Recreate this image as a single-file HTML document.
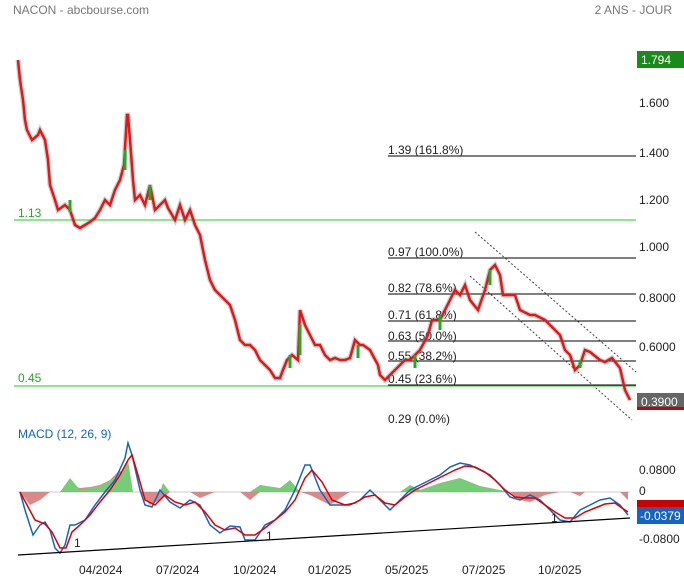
<!DOCTYPE html>
<html><head><meta charset="utf-8"><style>
body{margin:0;background:#fff;width:684px;height:580px;overflow:hidden;font-family:"Liberation Sans",sans-serif}
svg text{font-family:"Liberation Sans",sans-serif}
</style></head><body>
<svg width="684" height="580" xmlns="http://www.w3.org/2000/svg">
<text x="13" y="14" font-size="12" fill="#777">NACON - abcbourse.com</text>
<text x="672" y="14" font-size="12" fill="#777" text-anchor="end">2 ANS - JOUR</text>
<line x1="14" y1="220" x2="636" y2="220" stroke="#2c2" stroke-width="1"/>
<line x1="14" y1="386" x2="636" y2="386" stroke="#2c2" stroke-width="1"/>
<g stroke="#000" stroke-width="1">
<line x1="388" y1="156" x2="636" y2="156"/>
<line x1="388" y1="258" x2="636" y2="258"/>
<line x1="388" y1="294" x2="636" y2="294"/>
<line x1="388" y1="321" x2="636" y2="321"/>
<line x1="388" y1="341" x2="636" y2="341"/>
<line x1="388" y1="361" x2="636" y2="361"/>
<line x1="388" y1="385" x2="636" y2="385"/>
</g>
<g font-size="12" fill="#222">
<text x="18" y="217" fill="#2a2">1.13</text>
<text x="18" y="382" fill="#2a2">0.45</text>
<text x="388" y="154">1.39  (161.8%)</text>
<text x="388" y="256">0.97  (100.0%)</text>
<text x="388" y="292">0.82  (78.6%)</text>
<text x="388" y="319">0.71  (61.8%)</text>
<text x="388" y="340">0.63  (50.0%)</text>
<text x="388" y="360">0.55  (38.2%)</text>
<text x="388" y="383">0.45  (23.6%)</text>
<text x="388" y="423">0.29  (0.0%)</text>
</g>
<g stroke="#444" stroke-dasharray="2,2" stroke-width="1">
<line x1="475" y1="232" x2="636" y2="372"/>
<line x1="470" y1="276" x2="632" y2="420"/>
</g>
<polyline fill="none" stroke="#777" stroke-width="5" stroke-opacity="0.35" points="18,60 20,80 23,100 25,120 27,130 32,140 38,135 40,130 45,140 48,160 50,185 55,200 58,210 65,205 70,210 75,225 80,228 85,225 90,222 95,218 100,210 105,200 110,205 115,190 120,180 124,165 127,115 128,115 130,140 133,180 135,200 140,195 145,205 150,185 155,210 160,205 165,200 168,208 175,220 180,205 185,220 190,210 195,225 200,235 205,260 210,280 215,290 220,295 225,300 230,305 235,320 240,340 245,345 250,345 255,350 260,360 265,365 270,370 275,378 280,378 283,370 287,360 292,355 298,360 300,310 305,325 310,335 315,345 320,345 325,355 330,360 335,358 340,360 345,360 350,358 355,340 360,345 363,345 370,350 378,365 380,375 385,380 390,375 395,370 400,365 405,360 410,360 420,350 428,335 432,320 440,320 445,310 450,300 455,290 460,295 465,285 470,300 478,310 485,290 490,270 495,265 500,275 503,295 508,295 515,295 520,310 530,315 535,315 545,320 555,330 560,335 565,350 570,355 575,370 580,365 585,350 590,352 600,360 605,362 612,358 620,368 625,390 630,400"/>
<polyline fill="none" stroke="#e01818" stroke-width="2.5" points="18,60 20,80 23,100 25,120 27,130 32,140 38,135 40,130 45,140 48,160 50,185 55,200 58,210 65,205 70,210 75,225 80,228 85,225 90,222 95,218 100,210 105,200 110,205 115,190 120,180 124,165 127,115 128,115 130,140 133,180 135,200 140,195 145,205 150,185 155,210 160,205 165,200 168,208 175,220 180,205 185,220 190,210 195,225 200,235 205,260 210,280 215,290 220,295 225,300 230,305 235,320 240,340 245,345 250,345 255,350 260,360 265,365 270,370 275,378 280,378 283,370 287,360 292,355 298,360 300,310 305,325 310,335 315,345 320,345 325,355 330,360 335,358 340,360 345,360 350,358 355,340 360,345 363,345 370,350 378,365 380,375 385,380 390,375 395,370 400,365 405,360 410,360 420,350 428,335 432,320 440,320 445,310 450,300 455,290 460,295 465,285 470,300 478,310 485,290 490,270 495,265 500,275 503,295 508,295 515,295 520,310 530,315 535,315 545,320 555,330 560,335 565,350 570,355 575,370 580,365 585,350 590,352 600,360 605,362 612,358 620,368 625,390 630,400"/>
<g stroke="#2a2" stroke-width="3"><line x1="125" y1="150" x2="125" y2="170"/><line x1="70" y1="200" x2="70" y2="212"/><line x1="150" y1="185" x2="150" y2="200"/><line x1="300" y1="325" x2="300" y2="355"/><line x1="290" y1="355" x2="290" y2="368"/><line x1="440" y1="315" x2="440" y2="330"/><line x1="490" y1="270" x2="490" y2="285"/><line x1="415" y1="355" x2="415" y2="368"/><line x1="580" y1="360" x2="580" y2="368"/><line x1="358" y1="345" x2="358" y2="358"/></g>
<path d="M20,492 L30,505 L40,500 L50,492 L60,492 L70,485 L80,488 L90,487 L100,485 L110,480 L120,470 L130,492 Z M140,492 L150,505 L160,500 L170,492 Z M190,492 L200,498 L215,492 Z M240,492 L250,500 L260,492 Z" fill="#d88"/>
<path d="M60,492 L70,478 L80,490 L100,486 L120,475 L128,460 L133,492 Z M160,492 L163,483 L170,492 Z M250,492 L260,485 L280,488 L290,480 L300,492 Z M400,492 L410,485 L420,490 L440,483 L460,478 L480,486 L500,490 L510,492 Z" fill="#7c7"/>
<path d="M300,492 L310,495 L320,500 L330,505 L345,495 L350,492 Z M510,492 L520,500 L530,502 L545,495 L560,492 Z M570,492 L580,496 L585,492 Z M610,492 L620,492 L628,500 L628,492 Z" fill="#d88"/>
<line x1="18" y1="492" x2="630" y2="492" stroke="#999" stroke-width="0.5"/>
<polyline fill="none" stroke="#1565c0" stroke-width="1.5" points="20,492 25,510 33,535 40,525 45,522 50,530 55,548 60,553 65,545 70,525 75,525 85,520 95,505 105,492 115,480 125,458 128,443 132,455 140,490 145,505 152,507 160,490 170,502 180,508 190,500 200,505 210,525 220,533 230,526 240,527 245,540 255,540 265,525 275,520 285,510 295,490 305,465 310,465 320,490 330,505 340,505 350,505 360,500 370,490 380,500 390,510 400,500 410,490 420,485 430,480 440,475 450,467 460,463 470,465 480,470 490,475 500,485 510,497 520,500 530,495 540,500 550,510 560,520 570,522 580,510 590,505 600,500 610,498 620,505 628,515"/>
<polyline fill="none" stroke="#d00" stroke-width="1.5" points="20,492 27,505 35,520 45,524 52,532 60,548 66,548 72,532 80,525 90,515 100,502 110,490 120,475 128,460 132,455 138,475 145,500 155,505 165,495 175,502 185,505 195,502 205,512 215,525 225,530 235,528 245,535 255,535 265,528 275,520 285,512 295,500 305,478 312,470 322,482 332,500 345,505 355,503 365,497 375,495 385,503 395,505 405,497 415,490 425,485 435,480 445,475 455,470 465,466 475,467 485,472 495,480 505,490 515,497 525,498 535,498 545,505 555,512 565,518 575,518 585,512 595,508 605,504 615,503 622,508 628,512"/>
<line x1="18" y1="555" x2="630" y2="518" stroke="#000" stroke-width="1.2"/>
<text x="74" y="547" font-size="12" fill="#222">1</text>
<text x="266" y="540" font-size="12" fill="#222">1</text>
<text x="551" y="522" font-size="12" fill="#222">1</text>
<text x="18" y="438" font-size="12" fill="#1565c0">MACD (12, 26, 9)</text>
<g font-size="12" fill="#222">
<text x="639" y="107">1.600</text>
<text x="639" y="157">1.400</text>
<text x="639" y="204">1.200</text>
<text x="639" y="251">1.000</text>
<text x="639" y="302">0.8000</text>
<text x="639" y="351">0.6000</text>
<text x="639" y="474">0.0800</text>
<text x="639" y="495">0</text>
<text x="639" y="543">-0.0800</text>
</g>
<rect x="637" y="51" width="47" height="17" fill="#1a8a1a"/>
<text x="641" y="64" font-size="12" fill="#fff">1.794</text>
<rect x="637" y="393" width="47" height="17" fill="#666"/>
<rect x="637" y="407" width="47" height="3" fill="#c00"/>
<text x="641" y="406" font-size="12" fill="#fff">0.3900</text>
<rect x="637" y="500" width="47" height="8" fill="#c00"/>
<rect x="637" y="507" width="47" height="17" fill="#1565c0"/>
<text x="640" y="520" font-size="12" fill="#fff">-0.0379</text>
<g font-size="12" fill="#222">
<text x="79" y="574">04/2024</text>
<text x="156" y="574">07/2024</text>
<text x="233" y="574">10/2024</text>
<text x="308" y="574">01/2025</text>
<text x="385" y="574">05/2025</text>
<text x="462" y="574">07/2025</text>
<text x="538" y="574">10/2025</text>
</g>
</svg>
</body></html>
